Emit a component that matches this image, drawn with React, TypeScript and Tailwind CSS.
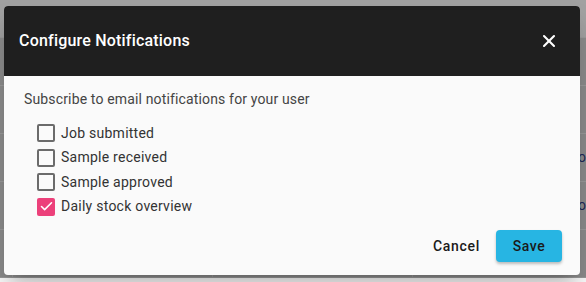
import { X, Check } from "lucide-react";

const options = [
  { label: "Job submitted", checked: false },
  { label: "Sample received", checked: false },
  { label: "Sample approved", checked: false },
  { label: "Daily stock overview", checked: true },
];

const rows = [0, 1, 2, 3, 4];

function BackgroundTable() {
  return (
    <div className="flex flex-col bg-[#8e8e8e]">
      <div className="h-[38px] border-b border-[#9c9c9c] bg-[#a2a2a2] pl-[60px] pt-[8px] text-[13px] text-[#333]">
        Sample info
      </div>
      {rows.map((r) => (
        <div key={r} className="grid h-[48px] grid-cols-[13px_200px_200px_1fr] border-b border-[#9c9c9c]">
          <div className="border-r border-[#9c9c9c]" />
          <div className="border-r border-[#9c9c9c]" />
          <div className="border-r border-[#9c9c9c]" />
          <div className="flex items-center pl-[165px] text-[14px] text-[#1e2a5a]">
            {r === 2 || r === 3 ? "oo" : ""}
          </div>
        </div>
      ))}
    </div>
  );
}

export default function App() {
  return (
    <div className="relative h-[282px] w-[586px] overflow-hidden font-['Roboto',sans-serif]">
      <BackgroundTable />
      <div className="absolute left-[4px] top-[6px] flex h-[269px] w-[576px] flex-col overflow-hidden rounded-[4px] bg-[#fafafa] shadow-[0_11px_15px_-7px_rgba(0,0,0,0.2),0_24px_38px_3px_rgba(0,0,0,0.14)]">
        <div className="flex h-[70px] shrink-0 items-center justify-between bg-[#1f1f1f] pl-[15px] pr-[21px]">
          <h2 className="text-[16px] font-medium tracking-[0.2px] text-white">Configure Notifications</h2>
          <X className="h-[20px] w-[20px] text-white" strokeWidth={2.5} />
        </div>
        <div className="flex flex-1 flex-col px-[20px] pt-[13px]">
          <p className="text-[14px] tracking-[0.15px] text-[#444]">Subscribe to email notifications for your user</p>
          <div className="mt-[14px] flex flex-col gap-[6px] pl-[13px]">
            {options.map((o) => (
              <label key={o.label} className="flex h-[18.5px] items-center gap-[6px] text-[14px] tracking-[0.25px] text-[#333]">
                {o.checked ? (
                  <span className="flex h-[18px] w-[18px] items-center justify-center rounded-[2px] bg-[#ec407a]">
                    <Check className="h-[15px] w-[15px] text-white" strokeWidth={2.5} />
                  </span>
                ) : (
                  <span className="h-[18px] w-[18px] rounded-[2px] border-2 border-[#6b6b6b]" />
                )}
                {o.label}
              </label>
            ))}
          </div>
          <div className="-mr-[2px] mt-auto mb-[13px] flex items-center justify-end gap-[8px]">
            <button className="h-[32px] px-[8px] text-[14px] font-medium tracking-[0.7px] text-[#1a1a1a]">
              Cancel
            </button>
            <button className="h-[32px] w-[66px] rounded-[4px] bg-[#27b5e3] text-[14px] font-medium tracking-[0.6px] text-[#1a1a1a] shadow-[0_2px_3px_rgba(0,0,0,0.25)]">
              Save
            </button>
          </div>
        </div>
      </div>
    </div>
  );
}
